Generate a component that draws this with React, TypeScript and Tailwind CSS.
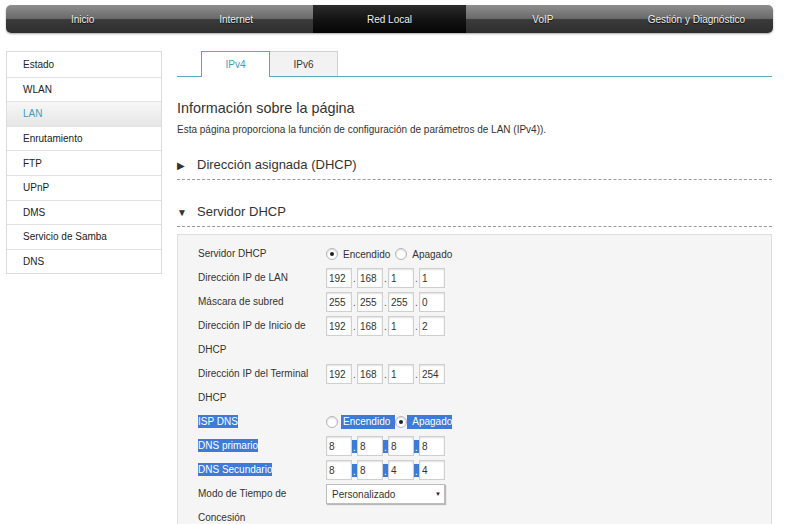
import React from "react";

const navItems = ["Inicio", "Internet", "Red Local", "VoIP", "Gestión y Diagnóstico"];
const sideItems = ["Estado", "WLAN", "LAN", "Enrutamiento", "FTP", "UPnP", "DMS", "Servicio de Samba", "DNS"];

function Radio({ checked }: { checked: boolean }) {
  return (
    <span className="inline-flex h-[12px] w-[12px] items-center justify-center rounded-full border border-[#b5b5b5] bg-white shadow-[inset_0_1px_2px_rgba(0,0,0,0.15)]">
      {checked && <span className="h-[4px] w-[4px] rounded-full bg-[#222]" />}
    </span>
  );
}

function IpBox({ v }: { v: string }) {
  return (
    <span className="inline-flex h-[20px] w-[26px] items-center border border-[#cfcfcf] bg-white pl-[2px] text-[10px] text-[#333] shadow-[inset_0_1px_2px_rgba(0,0,0,0.12)]">
      {v}
    </span>
  );
}

function Ip({ vals, sel }: { vals: string[]; sel?: boolean }) {
  return (
    <div className="flex items-center">
      {vals.map((v, i) => (
        <React.Fragment key={i}>
          {i > 0 && (
            <span
              className={
                sel
                  ? "flex h-[13px] w-[5px] items-end justify-center bg-[#3e7bd6] text-[10px] leading-[11px] text-white"
                  : "flex w-[5px] items-end justify-center text-[10px] leading-[11px] text-[#555]"
              }
            >
              .
            </span>
          )}
          <IpBox v={v} />
        </React.Fragment>
      ))}
    </div>
  );
}

function Row({ label, children, sel }: { label: React.ReactNode; children?: React.ReactNode; sel?: boolean }) {
  return (
    <div className="flex items-start">
      <div className="w-[128px] text-[10px] leading-[24px] text-[#333]">
        {sel ? <span className="bg-[#3e7bd6] py-[1px] text-white">{label}</span> : label}
      </div>
      <div className="flex h-[24px] items-center">{children}</div>
    </div>
  );
}

export default function App() {
  return (
    <div className="h-[524px] w-[786px] overflow-hidden bg-white font-['Liberation_Sans',Arial,sans-serif] text-[#333]">
      {/* Top navigation */}
      <div className="mx-[6px] mt-[5px] flex h-[28px] w-[767px] overflow-hidden rounded-[5px] shadow-[0_1px_2px_rgba(0,0,0,0.35)]">
        {navItems.map((n) => (
          <div
            key={n}
            className={
              n === "Red Local"
                ? "flex flex-1 items-center justify-center bg-[linear-gradient(to_bottom,#2c2c2c_0%,#141414_50%,#050505_100%)] text-[10px] text-[#f0f0f0] [text-shadow:0_1px_1px_rgba(0,0,0,0.8)]"
                : "flex flex-1 items-center justify-center bg-[linear-gradient(to_bottom,#8e8e8e_0%,#6a6a6a_48%,#3b3b3b_52%,#2e2e2e_100%)] text-[10px] text-[#eeeeee] [text-shadow:0_1px_1px_rgba(0,0,0,0.8)]"
            }
          >
            {n}
          </div>
        ))}
      </div>

      <div className="mt-[18px] flex">
        {/* Sidebar */}
        <div className="ml-[6px] w-[156px] self-start border border-[#dcdcdc]">
          {sideItems.map((s, i) => (
            <div
              key={s}
              className={
                (i > 0 ? "border-t border-[#e2e2e2] " : "") +
                (s === "LAN"
                  ? "flex h-[24.6px] items-center bg-[linear-gradient(to_bottom,#f7f7f7,#e6e6e6)] pl-[16px] text-[10px] text-[#3a9fc0]"
                  : "flex h-[24.6px] items-center bg-white pl-[16px] text-[10px] text-[#222]")
              }
            >
              {s}
            </div>
          ))}
        </div>

        {/* Main content */}
        <div className="ml-[15px] w-[595px]">
          {/* Tabs */}
          <div className="flex h-[26px] items-end border-b border-[#5aa8bd] pl-[24px]">
            <div className="-mb-[1px] flex h-[26px] w-[69px] items-center justify-center border border-b-0 border-[#5aa8bd] bg-white text-[10px] text-[#3a9fc0]">
              IPv4
            </div>
            <div className="flex h-[25px] w-[68px] items-center justify-center border border-b-0 border-l-0 border-[#d0d0d0] bg-[#f2f2f2] text-[10px] text-[#333]">
              IPv6
            </div>
          </div>

          <div className="mt-[22px] text-[14.4px] leading-[18px] text-[#333]">Información sobre la página</div>
          <div className="mt-[6px] text-[10px] leading-[13px] text-[#333]">
            Esta página proporciona la función de configuración de parámetros de LAN (IPv4)).
          </div>

          <div className="mt-[21px] flex items-center border-b border-dashed border-[#9a9a9a] pb-[6px]">
            <span className="w-[20px] text-[10px] text-[#333]">▶</span>
            <span className="text-[13px] leading-[16px] text-[#333]">Dirección asignada (DHCP)</span>
          </div>

          <div className="mt-[24px] flex items-center border-b border-dashed border-[#9a9a9a] pb-[6px]">
            <span className="w-[20px] text-[10px] text-[#333]">▼</span>
            <span className="text-[13px] leading-[16px] text-[#333]">Servidor DHCP</span>
          </div>

          {/* Form box */}
          <div className="mt-[7px] h-[300px] border border-[#dedede] bg-[#f5f5f5] pl-[20px] pt-[7px]">
            <Row label="Servidor DHCP">
              <Radio checked />
              <span className="ml-[5px] mr-[5px] text-[10px] text-[#333]">Encendido</span>
              <Radio checked={false} />
              <span className="ml-[5px] text-[10px] text-[#333]">Apagado</span>
            </Row>
            <Row label="Dirección IP de LAN">
              <Ip vals={["192", "168", "1", "1"]} />
            </Row>
            <Row label="Máscara de subred">
              <Ip vals={["255", "255", "255", "0"]} />
            </Row>
            <Row
              label={
                <>
                  Dirección IP de Inicio de
                  <br />
                  DHCP
                </>
              }
            >
              <Ip vals={["192", "168", "1", "2"]} />
            </Row>
            <Row
              label={
                <>
                  Dirección IP del Terminal
                  <br />
                  DHCP
                </>
              }
            >
              <Ip vals={["192", "168", "1", "254"]} />
            </Row>
            <Row label="ISP DNS" sel>
              <Radio checked={false} />
              <span className="ml-[3px] bg-[#3e7bd6] pl-[2px] pr-[5px] text-[10px] leading-[14px] text-white">Encendido</span>
              <Radio checked />
              <span className="bg-[#3e7bd6] pl-[5px] text-[10px] leading-[14px] text-white">Apagado</span>
            </Row>
            <Row label="DNS primario" sel>
              <Ip vals={["8", "8", "8", "8"]} sel />
            </Row>
            <Row label="DNS Secundario" sel>
              <Ip vals={["8", "8", "4", "4"]} sel />
            </Row>
            <Row
              label={
                <>
                  Modo de Tiempo de
                  <br />
                  Concesión
                </>
              }
            >
              <div className="flex h-[20px] w-[119px] items-center justify-between border border-[#bdbdbd] bg-white pl-[5px] pr-[3px] text-[10px] text-[#333] shadow-[1px_1px_1px_rgba(0,0,0,0.25)]">
                <span>Personalizado</span>
                <span className="text-[6px] text-[#222]">▼</span>
              </div>
            </Row>
          </div>
        </div>
      </div>
    </div>
  );
}
